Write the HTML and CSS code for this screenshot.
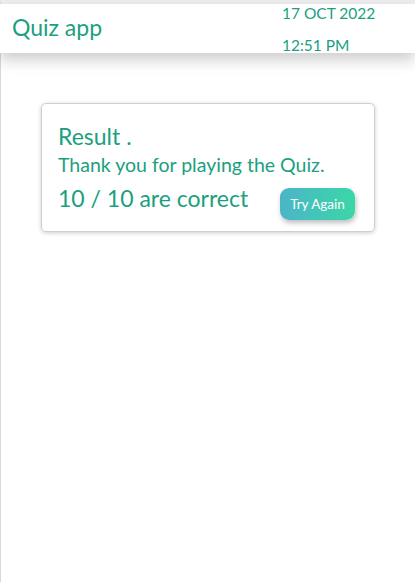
FILE: index.html
```html
<!DOCTYPE html>
<html>
<head>
<meta charset="utf-8">
<link rel="stylesheet" href="styles.css">
</head>
<body>
<div class="page">
  <header class="header">
    <div class="title">Quiz app</div>
    <div class="datetime">
      <div class="date">17 OCT 2022</div>
      <div class="time">12:51 PM</div>
    </div>
  </header>
  <main class="main">
    <section class="card">
      <h1 class="result">Result .</h1>
      <p class="thanks">Thank you for playing the Quiz.</p>
      <div class="score-row">
        <span class="score">10 / 10 are correct</span>
        <button class="btn">Try Again</button>
      </div>
    </section>
  </main>
</div>
</body>
</html>
```

FILE: styles.css
```css
* { box-sizing: border-box; }
html, body { margin: 0; padding: 0; height: 100%; }
body {
  background: #ffffff;
  font-family: Lato, "Open Sans", sans-serif;
  color: #1b9f80;
}
.page {
  min-height: 100%;
  border-left: 1px solid #d8d8d8;
  border-top: 4px solid #eeeeee;
}
.header {
  height: 49px;
  background: #fff;
  display: flex;
  justify-content: space-between;
  margin-left: -1px;
  box-shadow: 0 7px 14px rgba(0,0,0,0.2);
  position: relative;
}
.title {
  font-size: 23px;
  padding: 9px 0 0 12px;
}
.datetime {
  width: 133px;
  font-size: 15.5px;
  display: flex;
  flex-direction: column;
  justify-content: space-between;
}
.date { line-height: 18px; }
.time { line-height: 16px; }
.main {
  padding: 50px 40px 0 40px;
}
.card {
  border: 1px solid #cfcfcf;
  border-radius: 5px;
  box-shadow: 0 1px 4px rgba(0,0,0,0.2);
  padding: 18px 19px 11px 16px;
}
.result {
  margin: 0;
  font-weight: normal;
  font-size: 23px;
  line-height: 28px;
}
.thanks {
  margin: 3px 0 0 0;
  font-size: 19.5px;
  line-height: 24px;
}
.score-row {
  display: flex;
  justify-content: space-between;
  align-items: flex-start;
  margin-top: 7px;
}
.score {
  font-size: 23px;
  line-height: 28px;
}
.btn {
  margin-top: 4px;
  border: none;
  border-radius: 9px;
  background: linear-gradient(90deg, #4bb5c8, #3ad7a7);
  color: #fff;
  font-family: inherit;
  font-size: 13.5px;
  width: 75px;
  height: 32px;
  box-shadow: 1px 3px 5px rgba(0,0,0,0.25);
  padding: 0;
}
```
